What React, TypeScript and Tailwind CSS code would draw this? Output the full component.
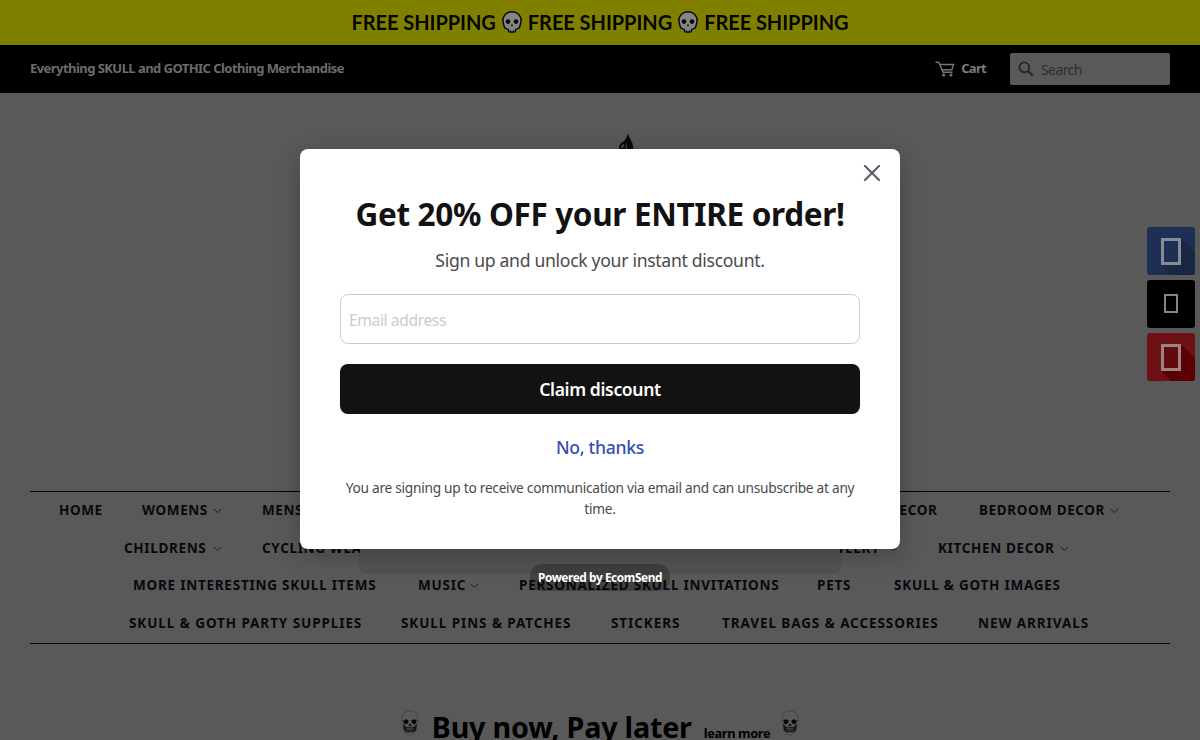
import { X } from "lucide-react"
import { clsx } from "clsx"

type NavItem = {
  name: string
  width: string
  dropdown?: boolean
  push?: boolean
}

const navRows: { style: string; items: NavItem[] }[] = [
  {
    style: "pl-[29px] pr-[51px] tracking-[0.6px]",
    items: [
      { name: "HOME", width: "w-[43px]" },
      { name: "WOMENS", width: "w-[80px]", dropdown: true },
      { name: "MENS", width: "w-[60px]", dropdown: true },
      { name: "DECOR", width: "w-[50px]", push: true },
      { name: "BEDROOM DECOR", width: "w-[140px]", dropdown: true },
    ],
  },
  {
    style: "pl-[94px] pr-[101px] tracking-[0.65px]",
    items: [
      { name: "CHILDRENS", width: "w-[98px]", dropdown: true },
      { name: "CYCLING WEAR", width: "w-[120px]" },
      { name: "JEWELRY", width: "w-[80px]", dropdown: true, push: true },
      { name: "KITCHEN DECOR", width: "w-[131px]", dropdown: true },
    ],
  },
  {
    style: "pl-[103px] tracking-[0.76px]",
    items: [
      { name: "MORE INTERESTING SKULL ITEMS", width: "w-[245px]" },
      { name: "MUSIC", width: "w-[61px]", dropdown: true },
      { name: "PERSONALIZED SKULL INVITATIONS", width: "w-[258px]" },
      { name: "PETS", width: "w-[37px]" },
      { name: "SKULL & GOTH IMAGES", width: "w-[168px]" },
    ],
  },
  {
    style: "pl-[99px] tracking-[0.92px]",
    items: [
      { name: "SKULL & GOTH PARTY SUPPLIES", width: "w-[232px]" },
      { name: "SKULL PINS & PATCHES", width: "w-[170px]" },
      { name: "STICKERS", width: "w-[71px]" },
      { name: "TRAVEL BAGS & ACCESSORIES", width: "w-[216px]" },
      { name: "NEW ARRIVALS", width: "w-[108px]" },
    ],
  },
]

function SkullEmoji() {
  return (
    <svg viewBox="0 0 20 22" className="mx-[6px] h-[22px] w-[20px]">
      <path
        d="M10 .8C4.600.8.9 4.500.9 9.300c0 2.400.5 3.600 1 4.900.3 1.300.2 2.400 1.300 3 .9.5 2.300.4 2.800 1.100.5.8.3 2.700 1.600 2.700h4.800c1.300 0 1.100-1.900 1.600-2.700.5-.7 1.900-.6 2.800-1.100 1.100-.6 1-1.700 1.300-3 .5-1.300 1-2.500 1-4.900C19.100 4.500 15.400.8 10 .8z"
        fill="#858585"
        stroke="#080808"
        strokeWidth="1.5"
      />
      <circle cx="6" cy="10.600" r="2.300" fill="#080808" />
      <circle cx="14" cy="10.600" r="2.300" fill="#080808" />
      <path d="M10 12.800l1.300 2.500H8.700z" fill="#080808" />
      <path d="M8.500 18.300v2M11.500 18.300v2" stroke="#333" strokeWidth=".8" />
    </svg>
  )
}

function SkullPicture() {
  return (
    <svg viewBox="0 0 18 26" className="h-[26px] w-[18px]">
      <path
        d="M9 1C3.500 1 1 4.500 1 9c0 3 .8 4.500 1.200 6 .2 3 .6 6 2.300 8 1.200 1.400 2.800 2 4.500 2s3.300-.6 4.500-2c1.700-2 2.100-5 2.300-8 .4-1.500 1.200-3 1.200-6 0-4.500-2.500-8-8-8z"
        fill="#595959"
        stroke="#3d3d3d"
        strokeWidth=".7"
      />
      <path d="M2.500 10.200c1.500-1 4-.8 5 .3.300 1.700-.8 3.500-2.700 3.700-1.500 0-2.500-1.700-2.300-4zM15.500 10.200c-1.500-1-4-.8-5 .3-.3 1.700.8 3.500 2.700 3.700 1.500 0 2.500-1.700 2.300-4z" fill="#050505" />
      <path d="M9 13l1.800 3.500L9 15.800l-1.800.7z" fill="#0a0a0a" />
      <path d="M2 14l3.400 3h7.200l3.400-3-1 6.300-2.500 2h-7l-2.500-2z" fill="#151515" />
      <path d="M5.500 18.200h7M5.900 20h6.200" stroke="#6c6c6c" strokeWidth=".9" strokeDasharray="1.200 .4" />
    </svg>
  )
}

function CartIcon() {
  return (
    <svg viewBox="0 0 20 16" className="h-[16px] w-[20px]" fill="none" stroke="#757575" strokeWidth="1.400">
      <path d="M.5 1.200h3.300L8 11.300h9.500M5 3.500h13.500l-1.600 5.300H7.200" />
      <circle cx="8.600" cy="14" r=".9" fill="#757575" />
      <circle cx="16" cy="14" r=".9" fill="#757575" />
    </svg>
  )
}

function SearchIcon() {
  return (
    <svg viewBox="0 0 16 16" className="h-[16px] w-[16px]" fill="none" stroke="#262626">
      <circle cx="6.300" cy="6.300" r="4.900" strokeWidth="1.900" />
      <path d="M9.900 9.900l4.800 4.600" strokeWidth="2.400" />
    </svg>
  )
}

function Chevron() {
  return (
    <svg viewBox="0 0 9 6" className="mt-[2px] ml-auto h-[6px] w-[9px]" fill="none" stroke="#1c1d22">
      <path d="M.8.9l3.700 3.700L8.200.9" />
    </svg>
  )
}

function Header() {
  return (
    <header>
      <div className="flex h-[45px] items-center justify-center bg-[#808000] pb-px font-['Lato',sans-serif] text-[20px] font-bold tracking-[-0.05px] whitespace-nowrap text-[#060600]">
        <span>FREE SHIPPING</span>
        <SkullEmoji />
        <span>FREE SHIPPING</span>
        <SkullEmoji />
        <span>FREE SHIPPING</span>
      </div>
      <div className="flex h-12 items-center bg-black px-[30px] text-[13px] font-bold text-[#6c6c6c]">
        <span className="tracking-[-0.55px] whitespace-nowrap">Everything SKULL and GOTHIC Clothing Merchandise</span>
        <a href="#" className="ml-auto flex items-center gap-[6px] tracking-[-0.7px] text-[#7d7d7d]">
          <CartIcon />
          Cart
        </a>
        <div className="ml-[24px] flex h-8 w-[160px] items-center gap-[7px] rounded-[2px] bg-[#595959] pl-[8px] text-[14px] font-normal tracking-[-0.6px] text-[#2f2f2f]">
          <SearchIcon />
          Search
        </div>
      </div>
    </header>
  )
}

function Navigation() {
  return (
    <nav className="mx-[30px] h-[153px] border-y border-black">
      <div className="-mt-[0.6px]">
        {navRows.map((row, i) => (
          <div
            key={i}
            className={clsx(
              "flex h-[37.6px] items-center gap-10 text-[13.5px] font-bold whitespace-nowrap text-[#08090e]",
              row.style
            )}
          >
            {row.items.map((item) => (
              <a key={item.name} href="#" className={clsx("flex shrink-0 items-center", item.width, item.push && "ml-auto")}>
                {item.name}
                {item.dropdown && <Chevron />}
              </a>
            ))}
          </div>
        ))}
      </div>
    </nav>
  )
}

function SocialButtons() {
  return (
    <div className="absolute top-[227px] right-[5px] flex flex-col gap-[5px]">
      <svg viewBox="0 0 48 48" className="h-12 w-12 rounded-[3px] bg-[#1d2f54]">
        <path d="M34 11l14 14v23H24L14 38z" fill="#192743" />
        <path d="M15.500 12.500h17v24h-17z" fill="#1d2f54" stroke="#858b97" strokeWidth="3" />
      </svg>
      <svg viewBox="0 0 48 48" className="h-12 w-12 rounded-[3px] bg-black">
        <path d="M18 15h12v17H18z" fill="none" stroke="#858585" strokeWidth="2" />
      </svg>
      <svg viewBox="0 0 48 48" className="h-12 w-12 rounded-[3px] bg-[#6d1115]">
        <path d="M34 11l14 14v23H24L14 38z" fill="#5c0004" />
        <path d="M15.500 12.500h17v24h-17z" fill="#640a0e" stroke="#9a8585" strokeWidth="3" />
      </svg>
    </div>
  )
}

function DiscountModal() {
  return (
    <div className="absolute inset-x-0 top-[149px] flex flex-col items-center">
      <div className="relative z-10 flex h-[400px] w-[600px] flex-col items-center rounded-lg bg-white px-10 shadow-[0_6px_24px_rgba(0,0,0,0.24)]">
        <button type="button" aria-label="Close" className="absolute top-[10px] right-[14px] text-[#5f5f6b]">
          <X className="h-7 w-7" strokeWidth={1.9} />
        </button>
        <h2 className="mt-[43px] text-[31.5px] leading-[44px] font-bold tracking-[-0.34px] whitespace-nowrap text-[#121212]">
          Get 20% OFF your ENTIRE order!
        </h2>
        <p className="mt-[10px] text-[17.6px] leading-7 tracking-[-0.31px] text-[#4a4a4a]">
          Sign up and unlock your instant discount.
        </p>
        <div className="mt-5 flex h-[50px] w-full items-center rounded-lg border border-[#cbcbcf] px-2 pt-[3px] text-[15.7px] tracking-[-0.42px] text-[#cbcbd4]">
          Email address
        </div>
        <button
          type="button"
          className="mt-5 h-[50px] w-full rounded-lg bg-[#121212] text-[17.6px] font-semibold tracking-[-0.38px] text-white"
        >
          Claim discount
        </button>
        <button type="button" className="mt-[19px] text-[17.6px] leading-7 font-medium tracking-[-0.3px] text-[#334fb4]">
          No, thanks
        </button>
        <p className="mt-[16px] w-[520px] text-center text-[13.7px] leading-[21px] tracking-[-0.26px] text-[#4a4a4a]">
          You are signing up to receive communication via email and can unsubscribe at any
          <br />
          time.
        </p>
      </div>
      <div className="h-[22px] w-[480px] rounded-b-[5px] bg-[#535353] shadow-[0_1px_3px_rgba(0,0,0,0.2)]" />
      <div className="relative z-10 -mt-[7px] flex h-[27px] w-[140px] items-center justify-center rounded-xl bg-black/25 text-[11.8px] font-bold tracking-[-0.39px] whitespace-nowrap text-white">
        Powered by EcomSend
      </div>
    </div>
  )
}

export default function App() {
  return (
    <div className="relative h-[740px] w-[1200px] overflow-hidden bg-[#595959] font-['Noto_Sans',sans-serif]">
      <Header />
      <div className="flex h-[398px] justify-center pt-[40px] pl-[54px]">
        <svg viewBox="0 0 18 24" className="h-[24px] w-[18px]">
          <path d="M10 0c.3 4 5 8 5.300 15v9H1c-1-4-.5-11 2-14 3-1 6-5 7-10z" fill="#0b0b0b" />
          <path d="M3 15c0-3 2-4 3.500-4L5 15zM8.500 9l.5 7-1.500-1zM11.500 10l1 6" fill="#4a4a4a" />
        </svg>
      </div>
      <Navigation />
      <div className="flex items-start justify-center pt-[60px] text-black">
        <div className="mt-[6px]">
          <SkullPicture />
        </div>
        <div className="ml-[13px] flex items-baseline gap-[12px] font-bold whitespace-nowrap">
          <span className="text-[28.7px] leading-[46px] tracking-[-0.2px]">Buy now, Pay later</span>
          <a href="#" className="text-[12.800px] tracking-[-0.36px]">
            learn more
          </a>
        </div>
        <div className="mt-[6px] ml-[11px]">
          <SkullPicture />
        </div>
      </div>
      <SocialButtons />
      <DiscountModal />
    </div>
  )
}
